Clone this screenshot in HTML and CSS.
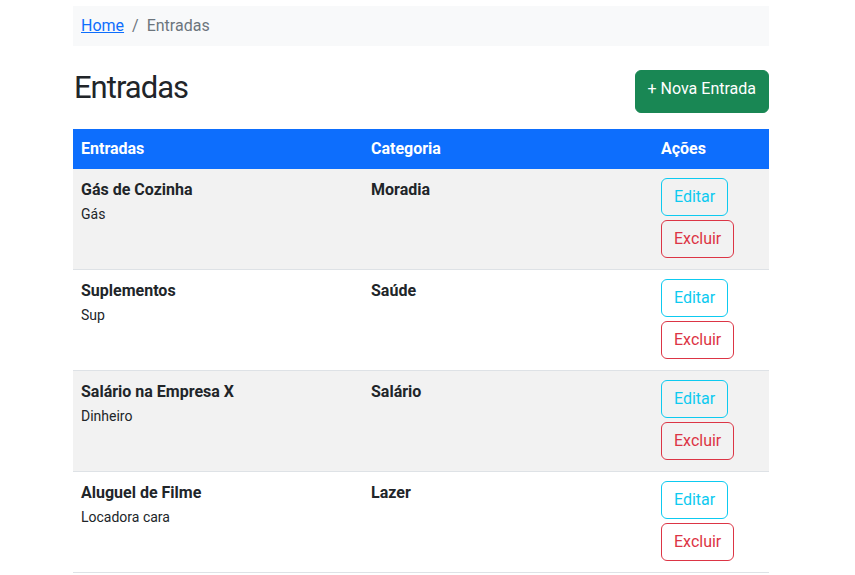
FILE: index.html
```html
<!DOCTYPE html>
<html lang="pt-BR">
<head>
<meta charset="utf-8">
<title>Entradas</title>
<link rel="stylesheet" href="styles.css">
</head>
<body>
<div class="container">
  <nav class="breadcrumb">
    <a class="crumb-link" href="#">Home</a>
    <span class="crumb-sep">/</span>
    <span class="crumb-active">Entradas</span>
  </nav>

  <div class="page-head">
    <h2 class="page-title">Entradas</h2>
    <a class="btn btn-success" href="#">+ Nova Entrada</a>
  </div>

  <table class="table">
    <thead>
      <tr>
        <th class="col-name">Entradas</th>
        <th class="col-cat">Categoria</th>
        <th class="col-act">Ações</th>
      </tr>
    </thead>
    <tbody>
      <tr class="striped">
        <td><strong>Gás de Cozinha</strong><br><small>Gás</small></td>
        <td><strong>Moradia</strong></td>
        <td class="actions"><a class="btn btn-outline-info" href="#">Editar</a><a class="btn btn-outline-danger" href="#">Excluir</a></td>
      </tr>
      <tr>
        <td><strong>Suplementos</strong><br><small>Sup</small></td>
        <td><strong>Saúde</strong></td>
        <td class="actions"><a class="btn btn-outline-info" href="#">Editar</a><a class="btn btn-outline-danger" href="#">Excluir</a></td>
      </tr>
      <tr class="striped">
        <td><strong>Salário na Empresa X</strong><br><small>Dinheiro</small></td>
        <td><strong>Salário</strong></td>
        <td class="actions"><a class="btn btn-outline-info" href="#">Editar</a><a class="btn btn-outline-danger" href="#">Excluir</a></td>
      </tr>
      <tr>
        <td><strong>Aluguel de Filme</strong><br><small>Locadora cara</small></td>
        <td><strong>Lazer</strong></td>
        <td class="actions"><a class="btn btn-outline-info" href="#">Editar</a><a class="btn btn-outline-danger" href="#">Excluir</a></td>
      </tr>
    </tbody>
  </table>
</div>
</body>
</html>
```

FILE: styles.css
```css
* { box-sizing: border-box; }

body {
  margin: 0;
  padding-top: 6px;
  font-family: Roboto, "Liberation Sans", sans-serif;
  font-size: 16px;
  line-height: 1.5;
  color: #212529;
  background: #fff;
}

.container {
  width: 720px;
  padding: 0 12px;
  margin-left: 61px;
}

.breadcrumb {
  display: flex;
  align-items: center;
  height: 40px;
  padding: 8px;
  background: #f8f9fa;
}

.crumb-link {
  color: #0d6efd;
  text-decoration: underline;
}

.crumb-sep {
  color: #6c757d;
  padding: 0 8px;
}

.crumb-active { color: #6c757d; }

.page-head {
  display: flex;
  align-items: flex-start;
  justify-content: space-between;
  height: 43px;
  margin-top: 24px;
  margin-bottom: 16px;
}

.page-title {
  margin: -1px 0 0 1px;
  font-size: 31px;
  font-weight: 400;
  letter-spacing: -1px;
  line-height: 1.2;
}

.btn {
  display: inline-flex;
  align-items: center;
  justify-content: center;
  border: 1px solid transparent;
  border-radius: 6px;
  padding: 6px 12px;
  font-size: 16px;
  line-height: 24px;
  text-decoration: none;
}

.btn-success {
  height: 43px;
  align-items: flex-start;
  padding-top: 6px;
  background: #198754;
  border-color: #198754;
  color: #fff;
}

.btn-outline-info {
  color: #0dcaf0;
  border-color: #0dcaf0;
}

.btn-outline-danger {
  color: #dc3545;
  border-color: #dc3545;
}

.table {
  width: 696px;
  border-collapse: collapse;
}

.table th {
  background: #0d6efd;
  color: #fff;
  font-weight: 700;
  text-align: left;
  padding: 8px;
}

.col-name, .col-cat { width: 290px; }
.col-act { width: 116px; }

.table td {
  vertical-align: top;
  padding: 9px 8px 7px;
  border-bottom: 1px solid #dee2e6;
}

.table td strong { font-weight: 700; }

.table td small { font-size: 14px; }

.striped td { background: #f2f2f2; }

.actions .btn {
  display: flex;
  width: fit-content;
  margin-bottom: 4px;
}
```
